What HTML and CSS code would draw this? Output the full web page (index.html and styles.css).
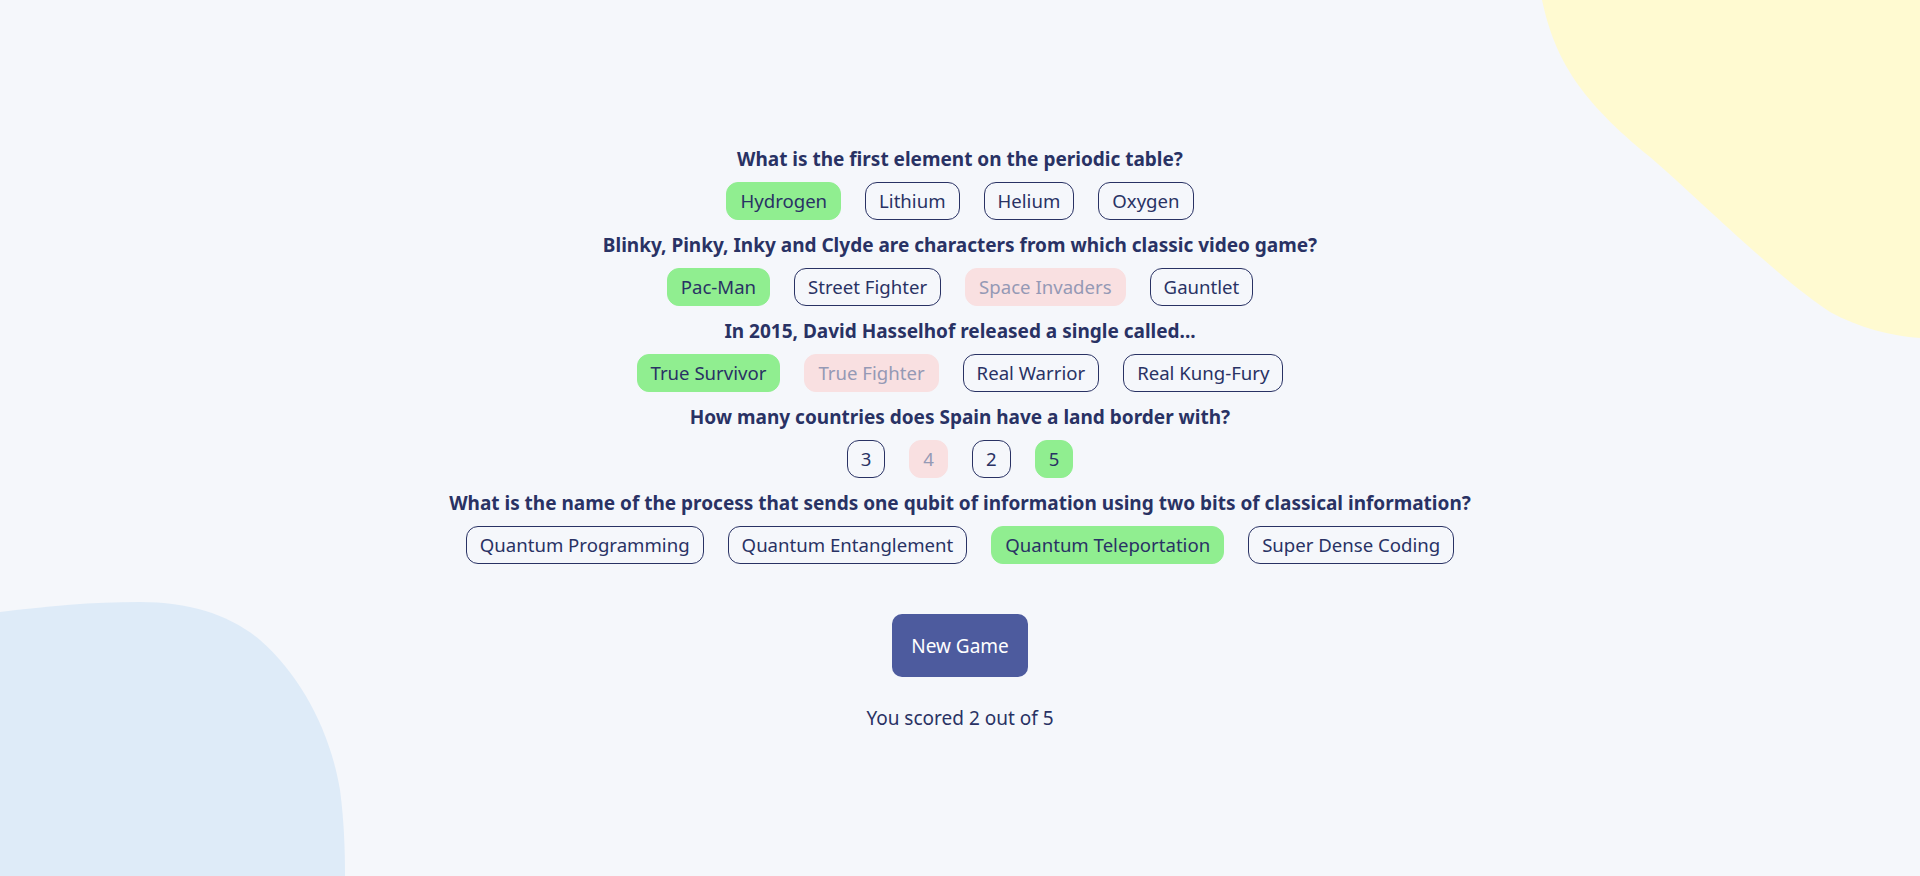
FILE: index.html
```html
<!DOCTYPE html>
<html lang="en">
<head>
<meta charset="utf-8">
<title>Quizzical</title>
<link rel="stylesheet" href="styles.css">
</head>
<body>
<svg class="blob blob-yellow" width="380" height="340" viewBox="0 0 380 340" xmlns="http://www.w3.org/2000/svg">
  <path d="M2 0 C15 60 40 100 110 157 C160 200 240 280 290 312 C320 328 350 336 380 338 L380 0 Z" fill="#FFFAD1"/>
</svg>
<svg class="blob blob-blue" width="350" height="276" viewBox="0 0 350 276" xmlns="http://www.w3.org/2000/svg">
  <path d="M0 12 C50 6 90 2 140 2 C190 2 230 15 260 40 C300 75 330 130 340 190 C344 220 345 250 345 276 L0 276 Z" fill="#DEEBF8"/>
</svg>
<main class="quiz">
  <section class="question">
    <h2 class="q-title">What is the first element on the periodic table?</h2>
    <div class="answers">
      <span class="answer correct">Hydrogen</span>
      <span class="answer">Lithium</span>
      <span class="answer">Helium</span>
      <span class="answer">Oxygen</span>
    </div>
  </section>
  <section class="question">
    <h2 class="q-title">Blinky, Pinky, Inky and Clyde are characters from which classic video game?</h2>
    <div class="answers">
      <span class="answer correct">Pac-Man</span>
      <span class="answer">Street Fighter</span>
      <span class="answer wrong">Space Invaders</span>
      <span class="answer">Gauntlet</span>
    </div>
  </section>
  <section class="question">
    <h2 class="q-title">In 2015, David Hasselhof released a single called...</h2>
    <div class="answers">
      <span class="answer correct">True Survivor</span>
      <span class="answer wrong">True Fighter</span>
      <span class="answer">Real Warrior</span>
      <span class="answer">Real Kung-Fury</span>
    </div>
  </section>
  <section class="question">
    <h2 class="q-title">How many countries does Spain have a land border with?</h2>
    <div class="answers">
      <span class="answer">3</span>
      <span class="answer wrong">4</span>
      <span class="answer">2</span>
      <span class="answer correct">5</span>
    </div>
  </section>
  <section class="question">
    <h2 class="q-title">What is the name of the process that sends one qubit of information using two bits of classical information?</h2>
    <div class="answers">
      <span class="answer">Quantum Programming</span>
      <span class="answer">Quantum Entanglement</span>
      <span class="answer correct">Quantum Teleportation</span>
      <span class="answer">Super Dense Coding</span>
    </div>
  </section>
  <button class="new-game">New Game</button>
  <p class="score">You scored 2 out of 5</p>
</main>
</body>
</html>
```

FILE: styles.css
```css
html, body {
  margin: 0;
  padding: 0;
}
body {
  background: #F5F7FB;
  font-family: "Noto Sans", "Open Sans", sans-serif;
  color: #293264;
  width: 1920px;
  height: 876px;
  overflow: hidden;
  position: relative;
}
.blob {
  position: absolute;
  z-index: 0;
}
.blob-yellow {
  top: 0;
  right: 0;
}
.blob-blue {
  left: 0;
  bottom: 0;
}
.quiz {
  position: relative;
  z-index: 1;
  display: flex;
  flex-direction: column;
  align-items: center;
  padding-top: 147px;
}
.question {
  display: flex;
  flex-direction: column;
  align-items: center;
  margin-bottom: 13px;
}
.q-title {
  margin: 0 0 11px;
  font-size: 19px;
  font-weight: 700;
  line-height: 24px;
}
.answers {
  display: flex;
  gap: 24px;
}
.answer {
  display: block;
  font-size: 18.6px;
  line-height: 24px;
  padding: 6px 13px;
  border: 1px solid #293264;
  border-radius: 12px;
  color: #293264;
}
.answer.correct {
  background: #90EE90;
  border-color: #90EE90;
}
.answer.wrong {
  background: #F9E0E1;
  border-color: #F9E0E1;
  color: #9599B5;
}
.new-game {
  margin-top: 37px;
  width: 136px;
  height: 63px;
  border: none;
  border-radius: 10px;
  background: #4D5B9E;
  color: #FFFFFF;
  font-family: inherit;
  font-size: 19px;
}
.score {
  margin: 29px 0 0;
  font-size: 19px;
  line-height: 24px;
}
```
